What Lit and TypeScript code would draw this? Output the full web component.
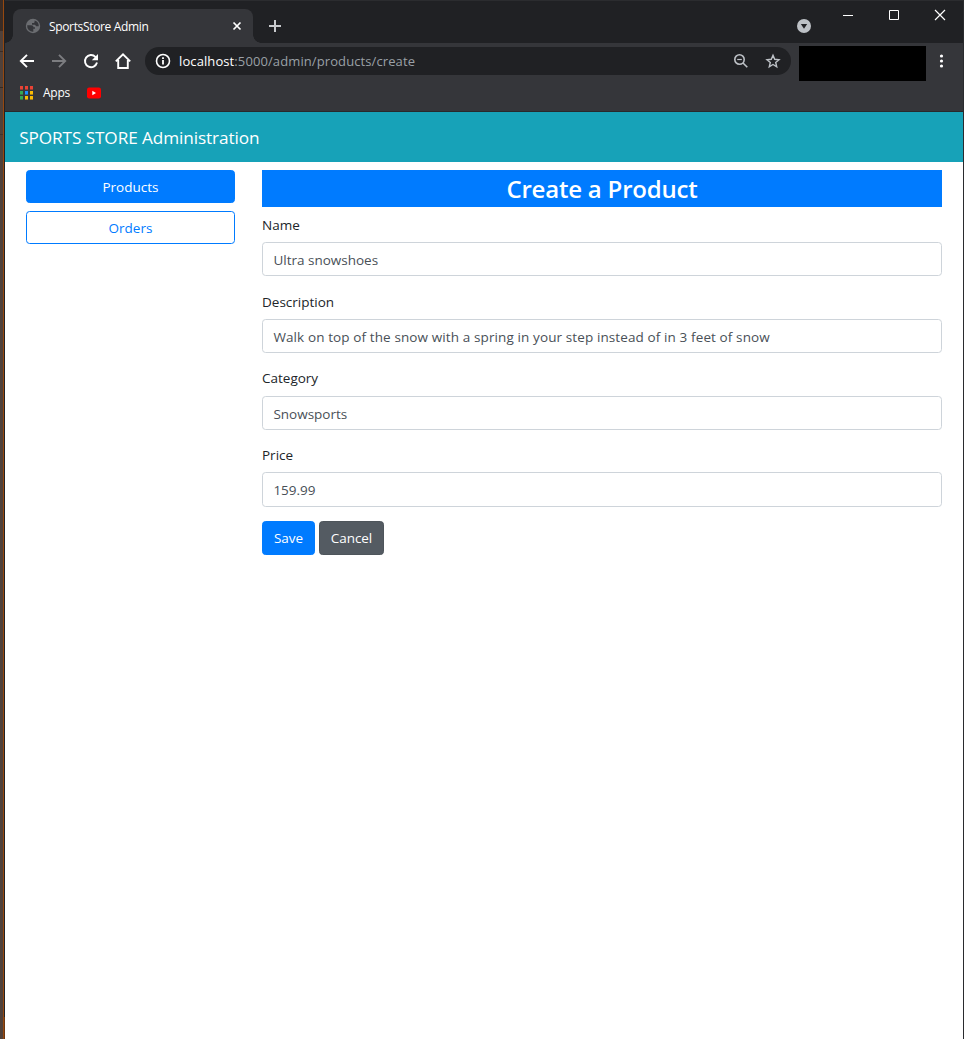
import { LitElement, html, css, svg } from "lit";
import { customElement, property } from "lit/decorators.js";

const stroke = (d: string, w = 2) =>
  svg`<path d=${d} fill="none" stroke="currentColor" stroke-width=${w} />`;

@customElement("browser-chrome")
class BrowserChrome extends LitElement {
  static styles = css`
    :host { display: block; color: #fff; font-family: "Open Sans", "Noto Sans", sans-serif; background: #35363a; }
    svg { display: block; flex: none; }
    .strip { height: 43px; background: #202124; display: flex; box-shadow: inset 0 1px #2b2c2f; }
    .tab { position: relative; margin: 9px 0 0 8px; width: 240px; height: 34px; box-sizing: border-box; background: #35363a;
      border-radius: 8px 8px 0 0; display: flex; align-items: center; padding: 0 9px 0 12px; }
    .tab::before, .tab::after { content: ""; position: absolute; bottom: 0; width: 8px; height: 8px; }
    .tab::before { left: -8px; background: radial-gradient(circle at 0 0, transparent 7.5px, #35363a 8px); }
    .tab::after { right: -8px; background: radial-gradient(circle at 100% 0, transparent 7.5px, #35363a 8px); }
    .title { flex: 1; margin-left: 8px; font-size: 12px; letter-spacing: -0.34px; white-space: nowrap; }
    .plus { margin: 19px 0 0 15px; color: #c8cacd; }
    .right { margin-left: auto; display: flex; }
    .drop { margin: 19px 31px 0 0; }
    .win { margin: 9px 33px 0 0; }
    .win.last { margin-right: 16px; }
    .bar { height: 36px; display: flex; align-items: center; padding-left: 14px; }
    .nav { margin-right: 16px; }
    .dim { color: #7c7d80; }
    .url { width: 646px; height: 28px; margin-left: 14px; box-sizing: border-box; border-radius: 14px; background: #202124;
      display: flex; align-items: center; padding: 0 10px; }
    .address { flex: 1; margin-left: 8px; margin-top: -1px; font-size: 13px; color: #9aa0a6; letter-spacing: 0.1px; white-space: nowrap; }
    .address b { font-weight: 400; color: #fff; }
    .tool { color: #bdc1c6; margin-left: 16px; }
    .mask { width: 127px; height: 35px; background: #000; margin: 4px 8px 0; }
    .marks { height: 32px; display: flex; align-items: center; padding-left: 14px; border-bottom: 1px solid #28292c; font-size: 12px; box-sizing: content-box; }
    .marks span { margin: -5px 16px 0 8px; letter-spacing: -0.25px; }
    .marks svg { margin-top: -4px; }
  `;
  render() {
    const dots = ["#ea4335", "#ea4335", "#ea4335", "#34a853", "#1a8cff", "#fbbc04", "#34a853", "#fbbc04", "#fbbc04"];
    return html`
      <div class="strip">
        <div class="tab">
          <svg width="16" height="16" viewBox="0 0 16 16">
            <circle cx="8" cy="8" r="7.2" fill="#6b6d71" />
            <path d="M2.2 7.2h4c1.5 0 2.3.9 2.3 2H10v1.6H8.3v2.9A5.8 5.8 0 0 1 2.2 7.2zM9.6 2.5v1.3c0 .8-.6 1.3-1.4 1.3H7v1.6h2.2c1 0 1.5.7 2 1.5h2.6A5.8 5.8 0 0 0 9.6 2.5z" fill="#35363a" />
          </svg>
          <span class="title">SportsStore Admin</span>
          <svg width="14" height="14" viewBox="0 0 14 14">${stroke("M3.5 3.5l7 7M10.5 3.5l-7 7", 1.7)}</svg>
        </div>
        <svg class="plus" width="14" height="14" viewBox="0 0 14 14">${stroke("M7 1v12M1 7h12")}</svg>
        <div class="right">
          <svg class="drop" width="14" height="14" viewBox="0 0 14 14"><circle cx="7" cy="7" r="7" fill="#bdc1c6" /><path d="M3.8 5h6.4L7 9.8z" fill="#202124" /></svg>
          <svg class="win" width="13" height="13" viewBox="0 0 13 13">${stroke("M1 6.5h10", 1)}</svg>
          <svg class="win" width="13" height="13" viewBox="0 0 13 13">${stroke("M1.5 1.5h9v9h-9z", 1)}</svg>
          <svg class="win last" width="13" height="13" viewBox="0 0 13 13">${stroke("M1 1l10 10M11 1l-10 10", 1.2)}</svg>
        </div>
      </div>
      <div class="bar">
        <svg class="nav" width="16" height="16" viewBox="0 0 16 16">${stroke("M15 8H2.5M8 1.8L1.8 8l6.2 6.2", 1.9)}</svg>
        <svg class="nav dim" width="16" height="16" viewBox="0 0 16 16">${stroke("M1 8h12.5M8 1.8L14.2 8 8 14.2", 1.9)}</svg>
        <svg class="nav" width="16" height="16" viewBox="0 0 16 16">${stroke("M14 9.6A6.1 6.1 0 1 1 12.4 3.8L13.5 5", 1.9)}<path d="M15 1v6.2H8.8z" fill="currentColor" /></svg>
        <svg width="16" height="16" viewBox="0 0 16 16">${stroke("M.8 8.4L8 1.4l7.2 7M3.2 7v8h9.6V7", 1.9)}</svg>
        <div class="url">
          <svg width="16" height="16" viewBox="0 0 16 16">${stroke("M8 1.5a6.5 6.5 0 1 1 0 13a6.5 6.5 0 1 1 0-13z", 1.6)}${stroke("M8 7v4.6M8 4.2v1.7", 1.8)}</svg>
          <span class="address"><b>localhost</b>:5000/admin/products/create</span>
          <svg class="tool" width="16" height="16" viewBox="0 0 16 16">${stroke("M6.5 1.8a4.7 4.7 0 1 1 0 9.4a4.7 4.7 0 1 1 0-9.4zM10 10l4.3 4.3", 1.6)}${stroke("M4.2 6.5h4.6", 1.2)}</svg>
          <svg class="tool" width="16" height="16" viewBox="0 0 16 16">${stroke("M8 2.3l1.7 4 4.3.4-3.3 2.8 1 4.3L8 11.5l-3.7 2.3 1-4.3L2 6.7l4.3-.4z", 1.4)}</svg>
        </div>
        <div class="mask"></div>
        <svg width="16" height="16" viewBox="0 0 16 16" fill="#fff"><circle cx="7.5" cy="3" r="1.6" /><circle cx="7.5" cy="8" r="1.6" /><circle cx="7.5" cy="13" r="1.6" /></svg>
      </div>
      <div class="marks">
        <svg width="16" height="16" viewBox="0 0 16 16">
          ${dots.map((c, i) => svg`<rect x=${1 + (i % 3) * 5} y=${1 + Math.floor(i / 3) * 5} width="3" height="3" fill=${c} /><rect x=${1 + (i % 3) * 5} y=${4 + Math.floor(i / 3) * 5} width="3" height="1" fill=${c} opacity=".55" />`)}
        </svg>
        <span>Apps</span>
        <svg width="16" height="16" viewBox="0 0 16 16"><rect x="1" y="2.5" width="14" height="11" rx="2.2" fill="#f00" /><path d="M6.3 5.8v4.4L10 8z" fill="#fff" /></svg>
      </div>
    `;
  }
}

@customElement("form-field")
class FormField extends LitElement {
  @property() label = "";
  @property() value = "";
  static styles = css`
    :host { display: block; margin-bottom: 13.2px; }
    .label { height: 21.6px; line-height: 24px; margin-bottom: 7.75px; color: #212529; }
    .box { height: 34.2px; line-height: 34px; box-sizing: border-box; border: 1px solid #ced4da; border-radius: 3.6px; padding: 0 10.4px; color: #495057; white-space: nowrap; }
    .box.long { letter-spacing: 0.11px; }
  `;
  render() {
    return html`<div class="label">${this.label}</div><div class="box ${this.value.length > 40 ? "long" : ""}">${this.value}</div>`;
  }
}

@customElement("app-root")
class AppRoot extends LitElement {
  static styles = css`
    :host { display: block; height: 1039px; overflow: hidden; }
    .screen { height: 1039px; display: flex; }
    .desk { flex: 0 0 3px; background: linear-gradient(#3a2c25 0 31px, #50413a 31px 51px, #3a2c25 51px 52px, #50413a 52px 87px, #35291f 87px 88px, #50413a 88px 134px, #40332d 134px 135px, #50413a 135px); }
    .glow { flex: 0 0 1px; background: #96480f; }
    .edge { flex: 0 0 1px; background: linear-gradient(#202124 0 1017px, #6a3510 1017px); }
    .edge.end { background: #2a2b2e; }
    .window { flex: 1; min-width: 0; display: flex; flex-direction: column; }
    .page { flex: 1; background: #fff; font: 13.5px "Open Sans", "Noto Sans", sans-serif; }
    .brand { height: 50px; box-sizing: border-box; background: #17a2b8; color: #fff; font-size: 17.2px; line-height: 51px; padding-left: 14.2px; letter-spacing: -0.09px; }
    .cols { display: grid; grid-template-columns: 209px 680px; column-gap: 27px; padding: 8px 0 0 21px; }
    .side { display: flex; flex-direction: column; gap: 8px; }
    .btn { box-sizing: border-box; border: 1px solid #007bff; border-radius: 3.6px; background: #007bff; color: #fff; text-align: center; line-height: 33px; }
    .side .btn { height: 33px; }
    .side .outline { background: #fff; color: #007bff; }
    .heading { height: 37px; line-height: 38px; background: #007bff; color: #fff; text-align: center; font-size: 24px; font-weight: 600; margin-bottom: 5.85px; letter-spacing: -0.2px; }
    .actions { display: flex; gap: 4px; padding-top: 0.95px; }
    .actions .btn { height: 34.2px; width: 53px; letter-spacing: -0.05px; }
    .actions .cancel { width: 65px; background: #545b62; border-color: #4e555b; }
  `;
  render() {
    return html`
      <div class="screen">
        <div class="desk"></div><div class="glow"></div><div class="edge"></div>
        <div class="window">
          <browser-chrome></browser-chrome>
          <div class="page">
            <div class="brand">SPORTS STORE Administration</div>
            <div class="cols">
              <div class="side">
                <div class="btn">Products</div>
                <div class="btn outline">Orders</div>
              </div>
              <div>
                <div class="heading">Create a Product</div>
                <form-field label="Name" value="Ultra snowshoes"></form-field>
                <form-field label="Description" value="Walk on top of the snow with a spring in your step instead of in 3 feet of snow"></form-field>
                <form-field label="Category" value="Snowsports"></form-field>
                <form-field label="Price" value="159.99"></form-field>
                <div class="actions">
                  <div class="btn">Save</div>
                  <div class="btn cancel">Cancel</div>
                </div>
              </div>
            </div>
          </div>
        </div>
        <div class="edge end"></div>
      </div>
    `;
  }
}
